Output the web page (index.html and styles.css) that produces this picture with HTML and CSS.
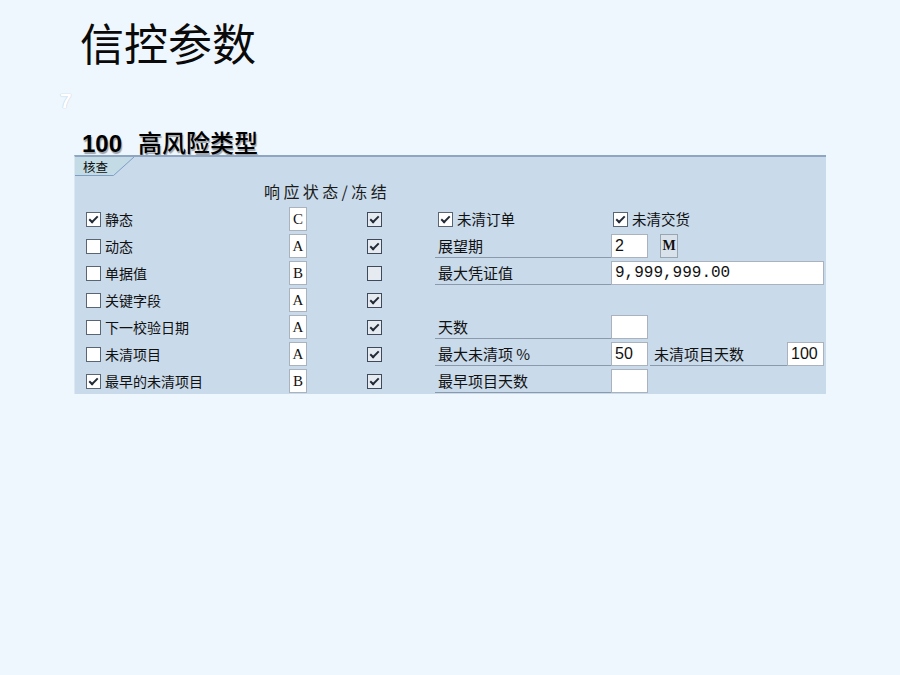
FILE: index.html
```html
<!DOCTYPE html>
<html lang="zh-CN">
<head>
<meta charset="utf-8">
<title>信控参数</title>
<link rel="stylesheet" href="styles.css">
</head>
<body>
<div class="slide">
  <h1 class="title">信控参数</h1>
  <div class="num">7</div>
  <h2 class="subtitle"><span class="digits">100</span><span class="sub-cjk">高风险类型</span></h2>
  <div class="panel">
    <div class="tab">
      <svg class="tab-bg" width="60" height="19" viewBox="0 0 60 19"><polygon points="0,0 59,0 38.5,19 0,19" fill="#c2dbe4"/><polyline points="0,18.5 38.5,18.5 59,0" fill="none" stroke="#7f9ec6" stroke-width="1"/></svg>
      <span class="tab-text">核查</span>
    </div>
    <div class="head">响应状态/冻结</div>
    <div class="rows">
      <div class="row">
        <div class="lcell"><span class="cb on"></span><span>静态</span></div>
        <div class="code">C</div>
        <span class="cb2 on"></span>
        <div class="right">
          <div class="rcheck"><span class="cb on"></span><span>未清订单</span></div>
          <div class="rcheck rcheck2"><span class="cb on"></span><span>未清交货</span></div>
        </div>
      </div>
      <div class="row">
        <div class="lcell"><span class="cb"></span><span>动态</span></div>
        <div class="code">A</div>
        <span class="cb2 on"></span>
        <div class="right">
          <div class="lbl">展望期</div>
          <div class="in">2</div>
          <div class="unit">M</div>
        </div>
      </div>
      <div class="row">
        <div class="lcell"><span class="cb"></span><span>单据值</span></div>
        <div class="code">B</div>
        <span class="cb2"></span>
        <div class="right">
          <div class="lbl">最大凭证值</div>
          <div class="in wide">9,999,999.00</div>
        </div>
      </div>
      <div class="row">
        <div class="lcell"><span class="cb"></span><span>关键字段</span></div>
        <div class="code">A</div>
        <span class="cb2 on"></span>
        <div class="right"></div>
      </div>
      <div class="row">
        <div class="lcell"><span class="cb"></span><span>下一校验日期</span></div>
        <div class="code">A</div>
        <span class="cb2 on"></span>
        <div class="right">
          <div class="lbl">天数</div>
          <div class="in"></div>
        </div>
      </div>
      <div class="row">
        <div class="lcell"><span class="cb"></span><span>未清项目</span></div>
        <div class="code">A</div>
        <span class="cb2 on"></span>
        <div class="right">
          <div class="lbl">最大未清项 %</div>
          <div class="in">50</div>
          <div class="lbl lbl2">未清项目天数</div>
          <div class="in">100</div>
        </div>
      </div>
      <div class="row">
        <div class="lcell"><span class="cb on"></span><span>最早的未清项目</span></div>
        <div class="code">B</div>
        <span class="cb2 on"></span>
        <div class="right">
          <div class="lbl">最早项目天数</div>
          <div class="in"></div>
        </div>
      </div>
    </div>
  </div>
</div>
</body>
</html>
```
FILE: styles.css
```css
html, body {
  margin: 0;
  padding: 0;
}
body {
  width: 900px;
  height: 675px;
  overflow: hidden;
  background: #eef6fe;
  font-family: "Noto Sans CJK SC", "Noto Sans", sans-serif;
  color: #000;
}
.slide {
  display: flex;
  flex-direction: column;
  align-items: flex-start;
}
.title {
  margin: 18px 0 0 80px;
  font-size: 44px;
  line-height: 48px;
  font-weight: 400;
  color: #0a0a0a;
}
.num {
  margin: 23px 0 0 60px;
  font-family: "Liberation Sans", sans-serif;
  font-size: 21px;
  line-height: 24px;
  font-weight: 700;
  color: #ffffff;
  text-shadow: 0 0 1px #b9cbe0, 0 0 1px #b9cbe0;
}
.subtitle {
  margin: 16px 0 0 82px;
  height: 26px;
  overflow: visible;
  font-size: 24px;
  line-height: 26px;
  font-weight: 700;
  color: #000;
  white-space: nowrap;
  text-shadow: 1px 2px 1px rgba(0, 0, 0, 0.35);
}
.digits {
  font-family: "Liberation Sans", sans-serif;
}
.sub-cjk {
  margin-left: 16px;
  font-family: "Noto Sans CJK SC", sans-serif;
  font-weight: 500;
}
.panel {
  margin-left: 74px;
  width: 752px;
  box-sizing: border-box;
  border-top: 2px solid #8ea6c2;
  border-left: 1px solid #dce7f2;
  background: #c9daea;
  padding-bottom: 1px;
}
.tab {
  position: relative;
  width: 60px;
  height: 19px;
}
.tab-bg {
  position: absolute;
  left: 0;
  top: 0;
}
.tab-text {
  position: relative;
  display: block;
  padding-left: 8px;
  font-size: 12.5px;
  line-height: 19px;
  color: #111;
}
.head {
  height: 31px;
  line-height: 31px;
  padding-left: 189px;
  font-size: 16px;
  letter-spacing: 3.4px;
  color: #1a1a1a;
}
.rows {
  display: flex;
  flex-direction: column;
  gap: 3px;
}
.row {
  display: flex;
  align-items: center;
  height: 24px;
}
.lcell {
  width: 203px;
  margin-left: 11px;
  display: flex;
  align-items: center;
  gap: 4px;
  font-size: 14px;
  line-height: 24px;
  color: #111;
}
.cb, .cb2 {
  width: 15px;
  height: 15px;
  box-sizing: border-box;
  flex: none;
  display: flex;
  align-items: center;
  justify-content: center;
}
.cb {
  background: #fff;
  border: 1px solid #5a6574;
}
.cb2 {
  margin-left: 60px;
  background: #e6ebf1;
  border: 1px solid #3f495a;
}
.cb.on::after, .cb2.on::after {
  content: "";
  width: 3px;
  height: 7px;
  margin-top: -2px;
  border: solid #222a36;
  border-width: 0 2px 2px 0;
  transform: rotate(45deg);
}
.code {
  width: 18px;
  height: 24px;
  box-sizing: border-box;
  background: #fff;
  border: 1px solid #aab3bd;
  font: 15px/22px "Liberation Serif", serif;
  text-align: center;
  color: #111;
}
.right {
  margin-left: 53px;
  display: flex;
  align-items: center;
  height: 24px;
}
.rcheck {
  width: 176px;
  box-sizing: border-box;
  padding-left: 3px;
  display: flex;
  align-items: center;
  gap: 4px;
  font-size: 14.5px;
  line-height: 24px;
  color: #111;
}
.rcheck2 {
  width: auto;
  padding-left: 2px;
}
.lbl {
  width: 176px;
  height: 24px;
  box-sizing: border-box;
  padding-left: 3px;
  border-bottom: 1px solid #8a9aac;
  font-size: 15px;
  line-height: 24px;
  color: #111;
  white-space: nowrap;
}
.lbl2 {
  width: 137px;
  margin-left: 2px;
  padding-left: 4px;
}
.in {
  width: 37px;
  height: 24px;
  box-sizing: border-box;
  background: #fff;
  border: 1px solid #aab3bd;
  padding-left: 3px;
  font: 16px/22px "Liberation Sans", sans-serif;
  color: #111;
}
.in.wide {
  width: 213px;
  font: 16px/22px "Liberation Mono", monospace;
}
.unit {
  margin-left: 12px;
  width: 18px;
  height: 24px;
  box-sizing: border-box;
  background: #d9e2eb;
  border: 1px solid #9aa5b2;
  font: bold 14px/22px "Liberation Serif", serif;
  text-align: center;
  color: #111;
}
```
